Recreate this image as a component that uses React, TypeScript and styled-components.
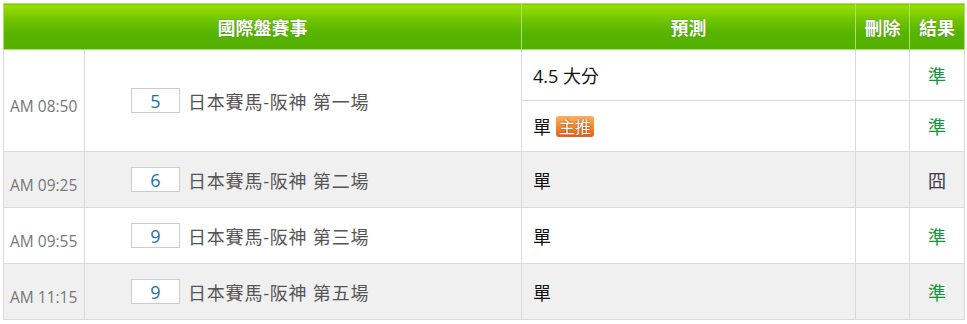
import React from 'react';
import styled, { createGlobalStyle } from 'styled-components';

const GlobalStyle = createGlobalStyle`
  body {
    margin: 0;
    background: #ffffff;
    font-family: "Open Sans", "Noto Sans CJK TC", sans-serif;
  }
`;

const Wrapper = styled.div`
  padding: 3px;
`;

const Table = styled.table`
  width: 961px;
  border-collapse: collapse;
  table-layout: fixed;
`;

const HeadCell = styled.th`
  height: 45px;
  padding: 0;
  border: 1px solid #a8e26a;
  background: linear-gradient(#9ae000 0%, #6fc400 35%, #56b300 65%, #54b100 100%);
  color: #ffffff;
  font-size: 18px;
  font-weight: bold;
  text-align: center;
  text-shadow: 0 0 1px rgba(0, 60, 0, 0.6);
`;

const Row = styled.tr<{ $alt?: boolean }>`
  background: ${(p) => (p.$alt ? '#f0f0f0' : '#ffffff')};
`;

const Cell = styled.td<{ $h?: number }>`
  height: ${(p) => (p.$h ? `${p.$h}px` : 'auto')};
  padding: 0;
  border: 1px solid #dadada;
  vertical-align: middle;
`;

const TimeCell = styled(Cell)`
  padding: 11px 0 0 6px;
  color: #777777;
  font-size: 15.5px;
  white-space: nowrap;
`;

const EventWrap = styled.div`
  display: flex;
  align-items: center;
  gap: 8px;
  padding-left: 46px;
`;

const NumBox = styled.span`
  display: inline-flex;
  align-items: center;
  justify-content: center;
  width: 47px;
  height: 23px;
  border: 1px solid #cccccc;
  background: #ffffff;
  color: #1c6fa8;
  font-size: 18px;
`;

const EventName = styled.span`
  color: #555555;
  font-size: 18px;
  letter-spacing: 0.8px;
`;

const PredictCell = styled(Cell)`
  padding-left: 11px;
  color: #111111;
  font-size: 18px;
`;

const PredictWrap = styled.div`
  display: flex;
  align-items: center;
  gap: 5px;
`;

const Badge = styled.span`
  display: inline-flex;
  align-items: center;
  justify-content: center;
  width: 38px;
  height: 21px;
  border-radius: 3px;
  background: linear-gradient(#fbb060 0%, #f38a30 50%, #e8621a 100%);
  color: #ffffff;
  font-size: 16px;
  text-shadow: 0 0 2px rgba(120, 40, 0, 0.8);
`;

const ResultCell = styled(Cell)<{ $hit?: boolean }>`
  text-align: center;
  font-size: 18px;
  color: ${(p) => (p.$hit ? '#17963a' : '#3a3a4a')};
`;

interface Pick {
  text: string;
  main?: boolean;
  hit: boolean;
}

interface Race {
  time: string;
  num: number;
  name: string;
  picks: Pick[];
}

const races: Race[] = [
  {
    time: 'AM 08:50',
    num: 5,
    name: '日本賽馬-阪神 第一場',
    picks: [
      { text: '4.5 大分', hit: true },
      { text: '單', main: true, hit: true },
    ],
  },
  { time: 'AM 09:25', num: 6, name: '日本賽馬-阪神 第二場', picks: [{ text: '單', hit: false }] },
  { time: 'AM 09:55', num: 9, name: '日本賽馬-阪神 第三場', picks: [{ text: '單', hit: true }] },
  { time: 'AM 11:15', num: 9, name: '日本賽馬-阪神 第五場', picks: [{ text: '單', hit: true }] },
];

const PickCells: React.FC<{ pick: Pick; h: number }> = ({ pick, h }) => (
  <>
    <PredictCell $h={h}>
      <PredictWrap>
        {pick.text}
        {pick.main && <Badge>主推</Badge>}
      </PredictWrap>
    </PredictCell>
    <Cell $h={h} />
    <ResultCell $h={h} $hit={pick.hit}>
      {pick.hit ? '準' : '囧'}
    </ResultCell>
  </>
);

const App: React.FC = () => {
  return (
    <Wrapper>
      <GlobalStyle />
      <Table>
        <colgroup>
          <col style={{ width: 81 }} />
          <col style={{ width: 437 }} />
          <col style={{ width: 334 }} />
          <col style={{ width: 54 }} />
          <col style={{ width: 55 }} />
        </colgroup>
        <thead>
          <tr>
            <HeadCell colSpan={2}>國際盤賽事</HeadCell>
            <HeadCell>預測</HeadCell>
            <HeadCell>刪除</HeadCell>
            <HeadCell>結果</HeadCell>
          </tr>
        </thead>
        <tbody>
          {races.map((race, i) => {
            const span = race.picks.length;
            const h = span > 1 ? 50 : 55;
            return race.picks.map((pick, j) => (
              <Row key={`${i}-${j}`} $alt={i % 2 === 1}>
                {j === 0 && (
                  <>
                    <TimeCell rowSpan={span}>{race.time}</TimeCell>
                    <Cell rowSpan={span}>
                      <EventWrap>
                        <NumBox>{race.num}</NumBox>
                        <EventName>{race.name}</EventName>
                      </EventWrap>
                    </Cell>
                  </>
                )}
                <PickCells pick={pick} h={h} />
              </Row>
            ));
          })}
        </tbody>
      </Table>
    </Wrapper>
  );
};

export default App;
